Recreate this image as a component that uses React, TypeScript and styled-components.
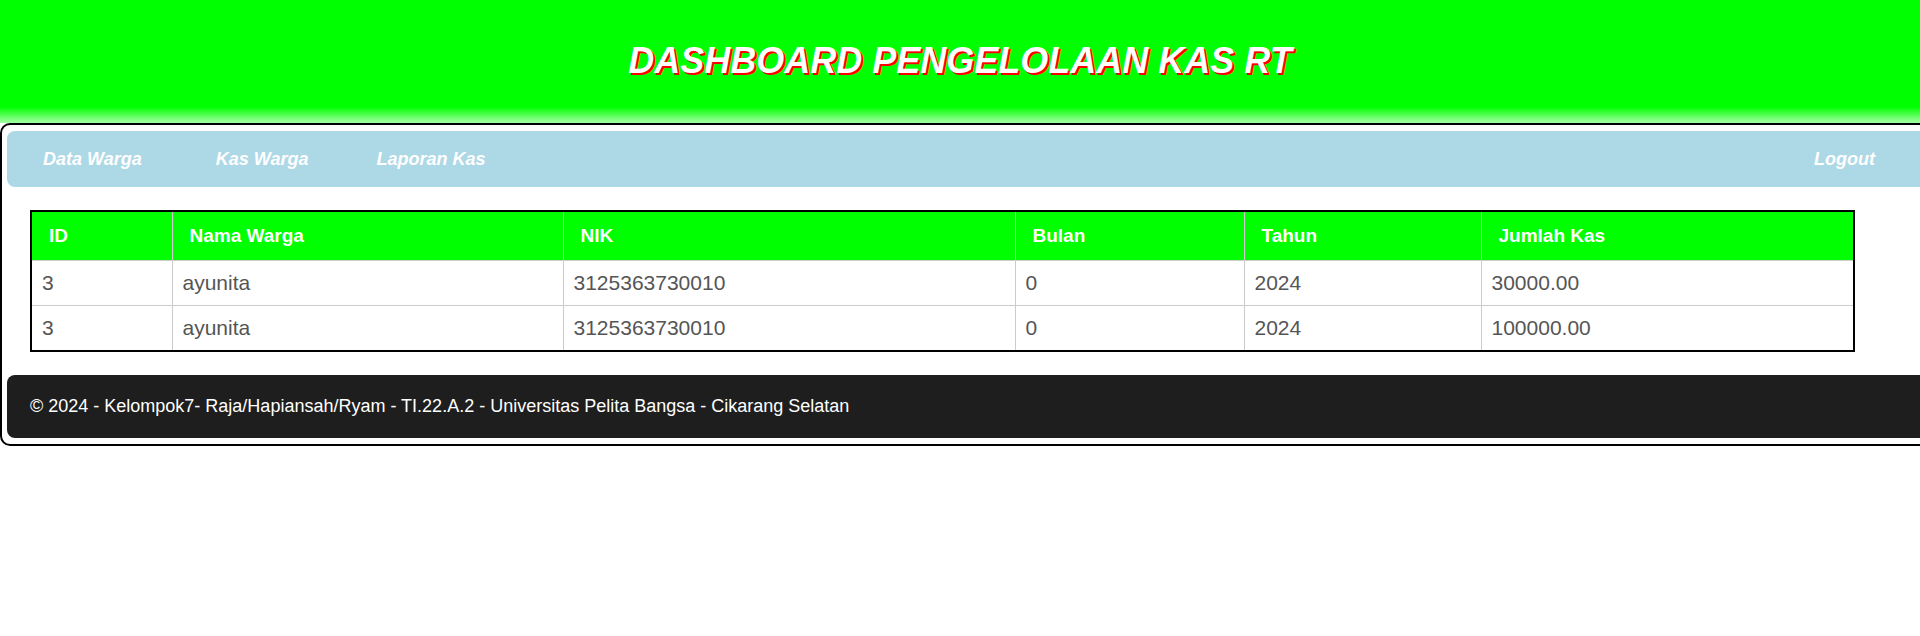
import React from "react";
import styled, { createGlobalStyle } from "styled-components";

const GlobalStyle = createGlobalStyle`
  html, body {
    margin: 0;
    padding: 0;
    background: #ffffff;
    overflow-x: hidden;
    font-family: "Liberation Sans", Arial, sans-serif;
  }
  * { box-sizing: border-box; }
`;

const Header = styled.header`
  height: 123px;
  display: flex;
  align-items: center;
  justify-content: center;
  padding-bottom: 2px;
  background: linear-gradient(to bottom, #00ff00 0px, #00ff00 107px, #a6ffa6 123px);
`;

const Title = styled.h1`
  margin: 0;
  font-family: "Liberation Sans", Arial, sans-serif;
  font-size: 36px;
  font-weight: bold;
  font-style: italic;
  color: #ffffff;
  text-shadow: 2px 2px 0 #ff0000;
`;

const Container = styled.div`
  width: 1930px;
  border: 2px solid #000000;
  border-radius: 10px;
  padding: 6px 0 6px 5px;
`;

const Nav = styled.nav`
  height: 56px;
  display: flex;
  align-items: center;
  gap: 71px;
  padding: 0 53px 0 36px;
  background: #add8e6;
  border-radius: 8px;
`;

const NavLink = styled.a<{ $push?: boolean; $shift?: number }>`
  font-family: "Liberation Sans", Arial, sans-serif;
  font-size: 18px;
  font-weight: bold;
  font-style: italic;
  color: #ffffff;
  text-decoration: none;
  margin-left: ${(p) => (p.$push ? "auto" : `${p.$shift ?? 0}px`)};
  margin-right: ${(p) => `${-(p.$shift ?? 0)}px`};
`;

const Main = styled.main`
  padding: 23px;
`;

const Table = styled.table`
  width: 1823px;
  table-layout: fixed;
  border-collapse: collapse;
  border: 2px solid #000000;
  font-family: "Liberation Sans", Arial, sans-serif;
`;

const Th = styled.th`
  background: #00ff00;
  color: #ffffff;
  font-size: 19px;
  font-weight: bold;
  text-align: left;
  padding: 13px 10px 13px 17px;
  border: 1px solid #cccccc;
  border-top: none;
`;

const Td = styled.td`
  color: #555555;
  font-size: 21px;
  padding: 10px;
  border: 1px solid #cccccc;
`;

const Footer = styled.footer`
  height: 63px;
  display: flex;
  align-items: center;
  padding: 0 23px;
  background: #1e1e1e;
  border-radius: 8px;
  color: #ffffff;
  font-family: "Liberation Sans", Arial, sans-serif;
  font-size: 18px;
`;

const columns = [
  { label: "ID", width: 141 },
  { label: "Nama Warga", width: 391 },
  { label: "NIK", width: 452 },
  { label: "Bulan", width: 229 },
  { label: "Tahun", width: 237 },
  { label: "Jumlah Kas", width: 373 },
];

const rows = [
  ["3", "ayunita", "3125363730010", "0", "2024", "30000.00"],
  ["3", "ayunita", "3125363730010", "0", "2024", "100000.00"],
];

export default function App() {
  return (
    <>
      <GlobalStyle />
      <Header>
        <Title>DASHBOARD PENGELOLAAN KAS RT</Title>
      </Header>
      <Container>
        <Nav>
          <NavLink href="#">Data Warga</NavLink>
          <NavLink href="#" $shift={3}>Kas Warga</NavLink>
          <NavLink href="#">Laporan Kas</NavLink>
          <NavLink href="#" $push>Logout</NavLink>
        </Nav>
        <Main>
          <Table>
            <colgroup>
              {columns.map((c) => (
                <col key={c.label} style={{ width: c.width }} />
              ))}
            </colgroup>
            <thead>
              <tr>
                {columns.map((c) => (
                  <Th key={c.label}>{c.label}</Th>
                ))}
              </tr>
            </thead>
            <tbody>
              {rows.map((r, i) => (
                <tr key={i}>
                  {r.map((v, j) => (
                    <Td key={j}>{v}</Td>
                  ))}
                </tr>
              ))}
            </tbody>
          </Table>
        </Main>
        <Footer>
          © 2024 - Kelompok7- Raja/Hapiansah/Ryam - TI.22.A.2 - Universitas Pelita Bangsa - Cikarang Selatan
        </Footer>
      </Container>
    </>
  );
}
